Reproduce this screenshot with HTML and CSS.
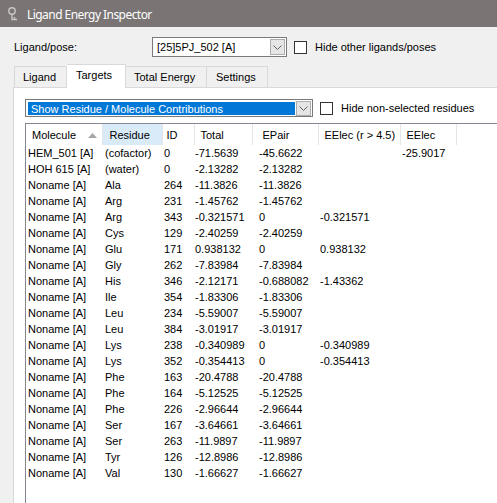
FILE: index.html
```html
<!DOCTYPE html>
<html lang="en">
<head>
<meta charset="utf-8">
<title>Ligand Energy Inspector</title>
<link rel="stylesheet" href="styles.css">
</head>
<body>
<div class="window">
  <div class="titlebar">
    <svg class="app-icon" width="16" height="16" viewBox="0 0 16 16">
      <circle cx="6" cy="5" r="3.2" fill="none" stroke="#c9c6c5" stroke-width="1.4"/>
      <path d="M6 8.2 V13.5 H11 M8.5 11 V13.5" fill="none" stroke="#c9c6c5" stroke-width="1.4"/>
    </svg>
    <span class="title">Ligand Energy Inspector</span>
  </div>

  <div class="ligand-row">
    <span class="label">Ligand/pose:</span>
    <div class="combo ligand-combo">
      <span class="combo-text">[25]5PJ_502 [A]</span>
      <span class="combo-btn">
        <svg width="9" height="5" viewBox="0 0 9 5"><path d="M0.5 0.5 L4.5 4.5 L8.5 0.5" fill="none" stroke="#606060" stroke-width="1"/></svg>
      </span>
    </div>
    <label class="check">
      <span class="box"></span>
      <span>Hide other ligands/poses</span>
    </label>
  </div>

  <div class="tabs">
    <div class="tab tab-ligand">Ligand</div>
    <div class="tab tab-targets active">Targets</div>
    <div class="tab tab-total">Total Energy</div>
    <div class="tab tab-settings">Settings</div>
  </div>

  <div class="tab-page">
    <div class="filter-row">
      <div class="combo mode-combo">
        <span class="combo-text selected">Show Residue / Molecule Contributions</span>
        <span class="combo-btn">
          <svg width="9" height="5" viewBox="0 0 9 5"><path d="M0.5 0.5 L4.5 4.5 L8.5 0.5" fill="none" stroke="#606060" stroke-width="1"/></svg>
        </span>
      </div>
      <label class="check">
        <span class="box"></span>
        <span>Hide non-selected residues</span>
      </label>
    </div>

    <div class="listview">
      <table class="grid">
        <colgroup>
          <col class="w-mol"><col class="w-res"><col class="w-id"><col class="w-tot">
          <col class="w-pair"><col class="w-elr"><col class="w-el"><col>
        </colgroup>
        <thead>
          <tr>
            <th class="c-mol">Molecule
              <svg class="sort" width="9" height="5" viewBox="0 0 9 5"><path d="M0 5 L4.5 0 L9 5 Z" fill="#a6a6a6"/></svg>
            </th>
            <th class="c-res hot">Residue</th>
            <th class="c-id">ID</th>
            <th class="c-tot">Total</th>
            <th class="c-pair">EPair</th>
            <th class="c-elr">EElec (r &gt; 4.5)</th>
            <th class="c-el">EElec</th>
            <th class="c-fill"></th>
          </tr>
        </thead>
        <tbody>
          <tr><td class="c-mol">HEM_501 [A]</td><td class="c-res">(cofactor)</td><td class="c-id">0</td><td class="c-tot">-71.5639</td><td class="c-pair">-45.6622</td><td class="c-elr"></td><td class="c-el">-25.9017</td><td></td></tr>
          <tr><td class="c-mol">HOH 615 [A]</td><td class="c-res">(water)</td><td class="c-id">0</td><td class="c-tot">-2.13282</td><td class="c-pair">-2.13282</td><td class="c-elr"></td><td class="c-el"></td><td></td></tr>
          <tr><td class="c-mol">Noname [A]</td><td class="c-res">Ala</td><td class="c-id">264</td><td class="c-tot">-11.3826</td><td class="c-pair">-11.3826</td><td class="c-elr"></td><td class="c-el"></td><td></td></tr>
          <tr><td class="c-mol">Noname [A]</td><td class="c-res">Arg</td><td class="c-id">231</td><td class="c-tot">-1.45762</td><td class="c-pair">-1.45762</td><td class="c-elr"></td><td class="c-el"></td><td></td></tr>
          <tr><td class="c-mol">Noname [A]</td><td class="c-res">Arg</td><td class="c-id">343</td><td class="c-tot">-0.321571</td><td class="c-pair">0</td><td class="c-elr">-0.321571</td><td class="c-el"></td><td></td></tr>
          <tr><td class="c-mol">Noname [A]</td><td class="c-res">Cys</td><td class="c-id">129</td><td class="c-tot">-2.40259</td><td class="c-pair">-2.40259</td><td class="c-elr"></td><td class="c-el"></td><td></td></tr>
          <tr><td class="c-mol">Noname [A]</td><td class="c-res">Glu</td><td class="c-id">171</td><td class="c-tot">0.938132</td><td class="c-pair">0</td><td class="c-elr">0.938132</td><td class="c-el"></td><td></td></tr>
          <tr><td class="c-mol">Noname [A]</td><td class="c-res">Gly</td><td class="c-id">262</td><td class="c-tot">-7.83984</td><td class="c-pair">-7.83984</td><td class="c-elr"></td><td class="c-el"></td><td></td></tr>
          <tr><td class="c-mol">Noname [A]</td><td class="c-res">His</td><td class="c-id">346</td><td class="c-tot">-2.12171</td><td class="c-pair">-0.688082</td><td class="c-elr">-1.43362</td><td class="c-el"></td><td></td></tr>
          <tr><td class="c-mol">Noname [A]</td><td class="c-res">Ile</td><td class="c-id">354</td><td class="c-tot">-1.83306</td><td class="c-pair">-1.83306</td><td class="c-elr"></td><td class="c-el"></td><td></td></tr>
          <tr><td class="c-mol">Noname [A]</td><td class="c-res">Leu</td><td class="c-id">234</td><td class="c-tot">-5.59007</td><td class="c-pair">-5.59007</td><td class="c-elr"></td><td class="c-el"></td><td></td></tr>
          <tr><td class="c-mol">Noname [A]</td><td class="c-res">Leu</td><td class="c-id">384</td><td class="c-tot">-3.01917</td><td class="c-pair">-3.01917</td><td class="c-elr"></td><td class="c-el"></td><td></td></tr>
          <tr><td class="c-mol">Noname [A]</td><td class="c-res">Lys</td><td class="c-id">238</td><td class="c-tot">-0.340989</td><td class="c-pair">0</td><td class="c-elr">-0.340989</td><td class="c-el"></td><td></td></tr>
          <tr><td class="c-mol">Noname [A]</td><td class="c-res">Lys</td><td class="c-id">352</td><td class="c-tot">-0.354413</td><td class="c-pair">0</td><td class="c-elr">-0.354413</td><td class="c-el"></td><td></td></tr>
          <tr><td class="c-mol">Noname [A]</td><td class="c-res">Phe</td><td class="c-id">163</td><td class="c-tot">-20.4788</td><td class="c-pair">-20.4788</td><td class="c-elr"></td><td class="c-el"></td><td></td></tr>
          <tr><td class="c-mol">Noname [A]</td><td class="c-res">Phe</td><td class="c-id">164</td><td class="c-tot">-5.12525</td><td class="c-pair">-5.12525</td><td class="c-elr"></td><td class="c-el"></td><td></td></tr>
          <tr><td class="c-mol">Noname [A]</td><td class="c-res">Phe</td><td class="c-id">226</td><td class="c-tot">-2.96644</td><td class="c-pair">-2.96644</td><td class="c-elr"></td><td class="c-el"></td><td></td></tr>
          <tr><td class="c-mol">Noname [A]</td><td class="c-res">Ser</td><td class="c-id">167</td><td class="c-tot">-3.64661</td><td class="c-pair">-3.64661</td><td class="c-elr"></td><td class="c-el"></td><td></td></tr>
          <tr><td class="c-mol">Noname [A]</td><td class="c-res">Ser</td><td class="c-id">263</td><td class="c-tot">-11.9897</td><td class="c-pair">-11.9897</td><td class="c-elr"></td><td class="c-el"></td><td></td></tr>
          <tr><td class="c-mol">Noname [A]</td><td class="c-res">Tyr</td><td class="c-id">126</td><td class="c-tot">-12.8986</td><td class="c-pair">-12.8986</td><td class="c-elr"></td><td class="c-el"></td><td></td></tr>
          <tr><td class="c-mol">Noname [A]</td><td class="c-res">Val</td><td class="c-id">130</td><td class="c-tot">-1.66627</td><td class="c-pair">-1.66627</td><td class="c-elr"></td><td class="c-el"></td><td></td></tr>
        </tbody>
      </table>
    </div>
  </div>
</div>
</body>
</html>
```

FILE: styles.css
```css
html, body {
  margin: 0;
  padding: 0;
}

body {
  width: 497px;
  height: 503px;
  overflow: hidden;
  background: #f0f0f0;
  font-family: "Liberation Sans", Arial, sans-serif;
  font-size: 11px;
  color: #000;
}

/* the window fills the viewport; the list view runs to its right edge */
.window {
  width: 497px;
  height: 503px;
  display: flex;
  flex-direction: column;
  background: #f0f0f0;
}

/* ---- title bar ---- */
.titlebar {
  height: 27px;
  flex: none;
  background: #7a7574;
  display: flex;
  align-items: center;
  padding-left: 6px;
  gap: 5px;
}

.title {
  font-family: "Noto Sans", "Open Sans", sans-serif;
  font-size: 12px;
  color: #ffffff;
  letter-spacing: -0.55px;
  padding-top: 1px;
}

/* ---- ligand selector row ---- */
.ligand-row {
  display: flex;
  align-items: center;
  height: 20px;
  margin-top: 10px;
  padding-left: 14px;
}

.label {
  width: 138px;
}

.combo {
  display: flex;
  align-items: stretch;
  box-sizing: border-box;
  border: 1px solid #7a7a7a;
  background: #fff;
}

.ligand-combo {
  width: 135px;
  height: 20px;
  padding: 1px;
}

.combo-text {
  flex: 1;
  display: flex;
  align-items: center;
  padding-left: 3px;
  white-space: nowrap;
}

.combo-btn {
  width: 15px;
  box-sizing: border-box;
  border: 1px solid #adadad;
  background: #e5e5e5;
  display: flex;
  align-items: center;
  justify-content: center;
}

.check {
  display: flex;
  align-items: center;
  gap: 8px;
  margin-left: 7px;
}

.box {
  width: 13px;
  height: 13px;
  box-sizing: border-box;
  border: 1px solid #333;
  background: #fff;
}

/* ---- tab strip ---- */
.tabs {
  display: flex;
  align-items: flex-end;
  height: 23px;
  margin-top: 7px;
  padding-left: 14px;
}

.tab {
  box-sizing: border-box;
  height: 21px;
  border: 1px solid #d9d9d9;
  border-bottom: none;
  background: #f0f0f0;
  display: flex;
  align-items: center;
  padding-left: 8px;
}

.tab + .tab {
  border-left: none;
}

.tab-ligand { width: 53px; }
.tab-targets { width: 59px; padding-left: 9px; }
.tab-total { width: 81px; }
.tab-settings { width: 61px; padding-left: 9px; }

.tab.active {
  height: 24px;
  margin-bottom: -1px;
  background: #fff;
  position: relative;
  z-index: 1;
  padding-bottom: 3px;
}

.tab.active + .tab {
  border-left: none;
}

/* ---- tab page ---- */
.tab-page {
  flex: 1;
  margin-left: 13px;
  border-top: 1px solid #d9d9d9;
  border-left: 1px solid #d9d9d9;
  background: #fff;
  padding: 11px 0 0 11px;
  display: flex;
  flex-direction: column;
  min-height: 0;
}

.filter-row {
  display: flex;
  align-items: center;
  height: 18px;
}

.mode-combo {
  width: 288px;
  height: 18px;
  padding: 2px 1px 1px 2px;
}

.combo-text.selected {
  background: #0078d7;
  color: #fff;
  padding-left: 3px;
  margin-right: 1px;
}

.mode-combo .combo-btn {
  margin: -1px 0 -1px 0;
}

/* ---- list view ---- */
.listview {
  flex: 1;
  margin-top: 6px;
  border-top: 1px solid #828790;
  border-left: 1px solid #828790;
  background: #fff;
  overflow: hidden;
}

.grid {
  border-collapse: collapse;
  table-layout: fixed;
  width: 100%;
}

.w-mol { width: 76px; }
.w-res { width: 60px; }
.w-id { width: 32px; }
.w-tot { width: 58px; }
.w-pair { width: 66px; }
.w-elr { width: 82px; }
.w-el { width: 56px; }

.grid th {
  height: 21px;
  padding: 0;
  font-weight: normal;
  text-align: left;
  border-right: 1px solid #e5e5e5;
  white-space: nowrap;
  position: relative;
}

.grid th.c-fill {
  border-right: none;
}

.grid th.hot {
  background: #d9ebf9;
}

.sort {
  position: absolute;
  left: 62px;
  top: 9px;
}

.grid td {
  height: 16px;
  padding: 0;
  white-space: nowrap;
  line-height: 16px;
}

th.c-mol { padding-left: 6px; }
th.c-res { padding-left: 7px; }
th.c-id { padding-left: 4px; }
th.c-tot { padding-left: 6px; }
th.c-pair { padding-left: 10px; }
th.c-elr { padding-left: 6px; }
th.c-el { padding-left: 6px; }

td.c-mol { padding-left: 2px; }
td.c-res { padding-left: 3px; }
td.c-id { padding-left: 2px; }
td.c-tot { padding-left: 1px; }
td.c-pair { padding-left: 7px; }
td.c-elr { padding-left: 2px; }
td.c-el { padding-left: 2px; }
```
